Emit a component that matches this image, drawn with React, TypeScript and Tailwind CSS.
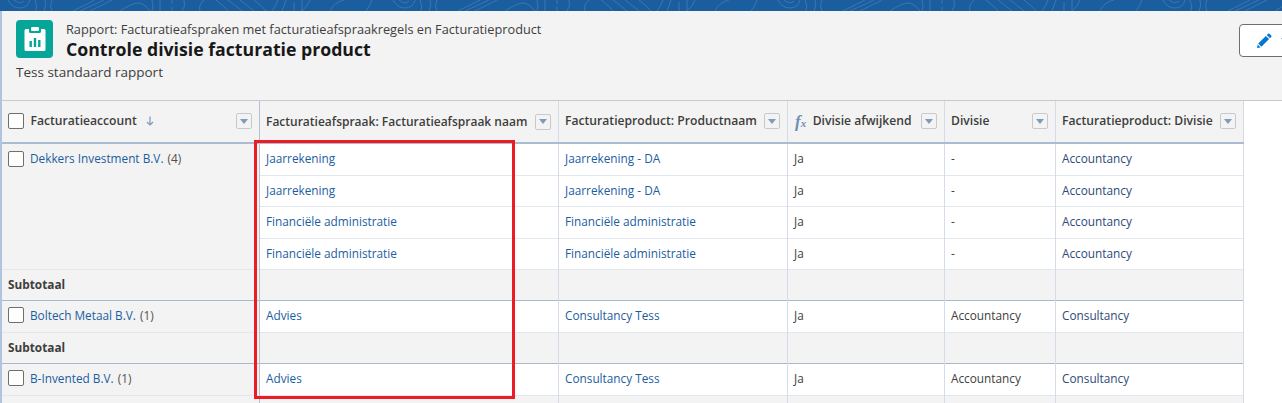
const groups = [
  {
    account: 'Dekkers Investment B.V.',
    count: 4,
    rows: [
      ['Jaarrekening', 'Jaarrekening - DA', 'Ja', '-', 'Accountancy'],
      ['Jaarrekening', 'Jaarrekening - DA', 'Ja', '-', 'Accountancy'],
      ['Financiële administratie', 'Financiële administratie', 'Ja', '-', 'Accountancy'],
      ['Financiële administratie', 'Financiële administratie', 'Ja', '-', 'Accountancy'],
    ],
    heights: ['h-[32px]', 'h-[31px]', 'h-[32px]', 'h-[31px]'],
    subtotal: 'h-[31px]',
  },
  {
    account: 'Boltech Metaal B.V.',
    count: 1,
    rows: [['Advies', 'Consultancy Tess', 'Ja', 'Accountancy', 'Consultancy']],
    heights: ['h-[32px]'],
    subtotal: 'h-[31px]',
  },
  {
    account: 'B-Invented B.V.',
    count: 1,
    rows: [['Advies', 'Consultancy Tess', 'Ja', 'Accountancy', 'Consultancy']],
    heights: ['h-[32px]'],
    subtotal: 'h-[31px]',
  },
]

function Checkbox() {
  return <span className="block h-[16px] w-[16px] shrink-0 rounded-[2px] border border-[#706e6b] bg-white" />
}

function MenuButton() {
  return (
    <span className="flex h-[16px] w-[16px] shrink-0 items-center justify-center rounded-[2px] border border-[#c9c9c9] bg-[#f3f3f3]">
      <span className="h-0 w-0 border-x-[4px] border-t-[5px] border-x-transparent border-t-[#7e9bbd]" />
    </span>
  )
}

function HeaderCell({ label, fx, sort, check, tight }: { label: string; fx?: boolean; sort?: boolean; check?: boolean; tight?: boolean }) {
  return (
    <th className={`h-[42px] border-r border-b-2 border-b-[#a9bcd2] bg-[#f3f3f3] p-0 text-left font-semibold ${check ? 'border-r-[#b4c2d2]' : 'border-r-[#d3dce8]'} ${tight ? 'text-[12px]' : 'text-[12.15px]'}`}>
      <div className={`flex items-center justify-between pr-[7px] ${check ? 'pl-[6px]' : 'pl-[6.5px]'}`}>
        <div className={`flex items-center gap-[6.5px] whitespace-nowrap`}>
          {check && <Checkbox />}
          {fx && <span className="ml-[1px] font-['Liberation_Serif',serif] text-[17px] leading-none text-[#6f8fb3] italic">f<span className="text-[11px]">x</span></span>}
          <span>{label}</span>
          {sort && (
            <svg width="8" height="10" viewBox="0 0 8 10" className="ml-[3px]" fill="none" stroke="#7e9bbd" strokeWidth="1.2">
              <path d="M4 0.5V9M1 6l3 3 3-3" />
            </svg>
          )}
        </div>
        <MenuButton />
      </div>
    </th>
  )
}

function SubtotalRow({ label, height }: { label?: string; height: string }) {
  return (
    <tr className={`border-b border-b-[#a9b8ca] bg-[#f3f3f3] ${height}`}>
      <td className="border-r border-r-[#b4c2d2] pl-[6px] font-bold text-[#3e3e3c]">{label}</td>
      {[0, 1, 2, 3, 4].map((i) => (
        <td key={i} className="border-r border-r-[#d3dce8]" />
      ))}
    </tr>
  )
}

export default function App() {
  return (
    <div className="relative h-[403px] w-[1282px] overflow-hidden bg-white font-['Open_Sans','Noto_Sans',sans-serif] text-[11.8px] text-[#3e3e3c]">
      {/* blue band on top, with the faint contour lines */}
      <div className="h-[11px] w-full bg-[#1b5e9f]">
        <svg width="1282" height="11" fill="none" stroke="#3a75ae" strokeWidth="1">
          <defs>
            <pattern id="contour" width="385" height="11" patternUnits="userSpaceOnUse">
              <path d="M8 0q4 8 12 8t10-8M14 0q6 5 10 1M35 0q3 6 1 11M45 0q2 6-1 11M52 0q-3 6 0 11M73 11 95 0M80 11 104 0M90 11 112 0M120 11q12-8 18-8t12 8M152 0q2 6 0 11M160 0v11M172 0v4M172 7v4M184 0q2 6-2 11M200 11q-2-6 4-11M216 0q8 6 12 11M228 0q8 6 14 11M240 0q8 6 14 11M254 0q8 6 12 11M278 0q-2 6-6 11M286 0q-2 6-4 11M294 2v9M302 0v11M310 0q-2 6-8 11M330 11q4-9 14-11M372 0q-2 6-6 11" />
            </pattern>
          </defs>
          <rect width="1282" height="11" fill="url(#contour)" stroke="none" />
        </svg>
      </div>

      <div className="flex">
        <div className="w-[2px] shrink-0 bg-[#b0c4df]" />
        <div className="min-w-0 flex-1">
          {/* report header */}
          <div className="relative h-[90px] border-b border-[#c9c9c9] bg-[#f3f3f3] pt-[9px] pl-[14px]">
            <div className="flex gap-[13px]">
              <div className="flex h-[38px] w-[37px] items-center justify-center rounded-[4px] bg-[#06a59a]">
                <svg width="24" height="26" viewBox="0 0 24 26" fill="#fff">
                  <path d="M3 3h3v2.5a1.5 1.5 0 0 0 1.5 1.5h9A1.5 1.5 0 0 0 18 5.5V3h3a1.5 1.5 0 0 1 1.5 1.5v19A1.5 1.5 0 0 1 21 25H3a1.5 1.5 0 0 1-1.5-1.5v-19A1.5 1.5 0 0 1 3 3Z" />
                  <rect x="8" y="1" width="8" height="4" rx="1.2" />
                  <rect x="6.5" y="15" width="2.4" height="6" fill="#06a59a" />
                  <rect x="10.8" y="12" width="2.4" height="9" fill="#06a59a" />
                  <rect x="15.1" y="14" width="2.4" height="7" fill="#06a59a" />
                </svg>
              </div>
              <div>
                <div className="text-[12.75px] leading-[19px] text-[#3e3e3c]">Rapport: Facturatieafspraken met facturatieafspraakregels en Facturatieproduct</div>
                <div className="text-[17.7px] leading-[20px] font-bold text-[#181818]">Controle divisie facturatie product</div>
              </div>
            </div>
            <div className="mt-[4px] text-[13.5px] leading-[18px] text-[#3e3e3c]">Tess standaard rapport</div>
            <div className="absolute top-[13px] right-[-9px] flex h-[33px] w-[52px] items-center gap-[9px] rounded-[4px] border border-[#706e6b] bg-white pl-[17px]">
              <svg width="15" height="15" viewBox="0 0 15 15" fill="#0176d3">
                <path d="M11 .8a1 1 0 0 1 1.4 0l1.8 1.8a1 1 0 0 1 0 1.4l-1.2 1.2-3.2-3.2ZM8.9 2.9l3.2 3.2-7.7 7.7-3.2-3.2ZM.6 11.4l3 3-3.5.6Z" />
              </svg>
              <span className="h-0 w-0 border-x-[4px] border-t-[5px] border-x-transparent border-t-[#0176d3]" />
            </div>
          </div>

          {/* report table */}
          <table className="table-fixed border-collapse">
            <colgroup>
              <col className="w-[257px]" />
              <col className="w-[299px]" />
              <col className="w-[229px]" />
              <col className="w-[157px]" />
              <col className="w-[111px]" />
              <col className="w-[188px]" />
            </colgroup>
            <thead>
              <tr>
                <HeaderCell label="Facturatieaccount" sort check />
                <HeaderCell label="Facturatieafspraak: Facturatieafspraak naam" tight />
                <HeaderCell label="Facturatieproduct: Productnaam" />
                <HeaderCell label="Divisie afwijkend" fx />
                <HeaderCell label="Divisie" />
                <HeaderCell label="Facturatieproduct: Divisie" />
              </tr>
            </thead>
            {groups.map((group, g) => (
              <tbody key={group.account}>
                {group.rows.map((row, i) => (
                  <tr key={i} className={`border-b border-b-[#e1e6ef] ${group.heights[i]}`}>
                    {i === 0 && (
                      <td rowSpan={group.rows.length} className="border-r border-r-[#b4c2d2] bg-[#f3f3f3] pt-[6px] pl-[6px] align-top">
                        <div className="flex items-center">
                          <Checkbox />
                          <span className="ml-[6px] text-[#1b5e9f]">{group.account}</span>
                          <span className="ml-[4px] text-[#514f4d]">({group.count})</span>
                        </div>
                      </td>
                    )}
                    <td className="border-r border-r-[#d3dce8] pl-[6.5px] text-[#1b5e9f]">{row[0]}</td>
                    <td className="border-r border-r-[#d3dce8] pl-[6.5px] text-[#1b5e9f]">{row[1]}</td>
                    <td className="border-r border-r-[#d3dce8] pl-[6.5px]">{row[2]}</td>
                    <td className="border-r border-r-[#d3dce8] pl-[6.5px]">{row[3]}</td>
                    <td className="border-r border-r-[#d3dce8] pl-[6.5px] text-[#2e4a78]">{row[4]}</td>
                  </tr>
                ))}
                {/* the last subtotal falls below the fold */}
                <SubtotalRow height={group.subtotal} label={g < groups.length - 1 ? 'Subtotaal' : undefined} />
              </tbody>
            ))}
          </table>
        </div>
      </div>

      {/* red annotation drawn over the screenshot */}
      <div className="absolute top-[140px] left-[254px] h-[259px] w-[261px] border-[3px] border-[#ed1c24]" />
    </div>
  )
}
